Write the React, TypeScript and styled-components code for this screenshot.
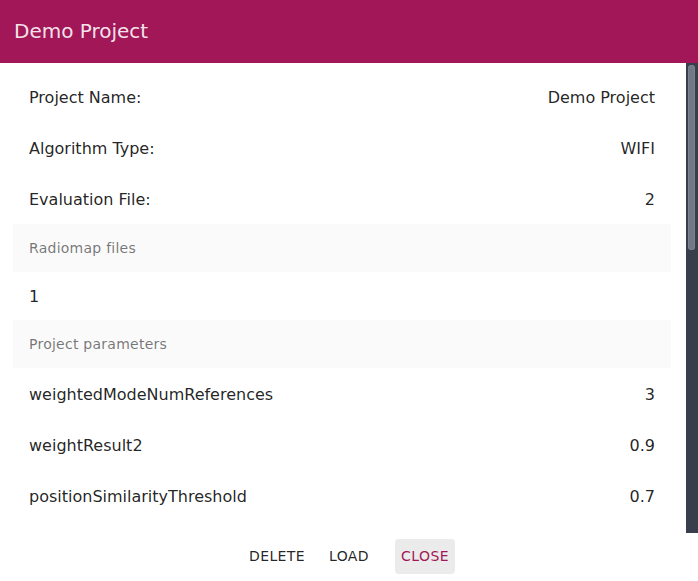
import React from "react";
import styled, { createGlobalStyle } from "styled-components";

const GlobalStyle = createGlobalStyle`
  html, body { margin: 0; padding: 0; height: 100%; background: #ffffff; }
  body { font-family: "DejaVu Sans", Verdana, sans-serif; -webkit-font-smoothing: antialiased; }
  #root { height: 100%; }
  * { box-sizing: border-box; }
`;

const Dialog = styled.div`
  display: flex;
  flex-direction: column;
  height: 100vh;
  background: #ffffff;
`;

const Header = styled.header`
  flex: 0 0 63px;
  display: flex;
  align-items: center;
  padding: 0 13px 1px 14px;
  background: #a21757;
  color: rgba(255, 255, 255, 0.9);
  font-size: 20px;
  font-weight: 400;
`;

const Body = styled.div`
  flex: 0 0 470px;
  display: flex;
  min-height: 0;
`;

const Content = styled.div`
  flex: 1 1 auto;
  overflow: hidden;
  padding: 8px 15px 0 13px;
`;

const ScrollTrack = styled.div`
  flex: 0 0 12px;
  padding: 2px 3px 0 2px;
  background: #393e4c;
`;

const ScrollThumb = styled.div`
  height: 185px;
  border-radius: 4px;
  background: #737887;
  box-shadow: inset 0 0 0 1px #7d8290;
`;

const List = styled.ul`
  list-style: none;
  margin: 0;
  padding: 0;
`;

const Row = styled.li<{ $tall?: boolean }>`
  display: flex;
  align-items: center;
  justify-content: space-between;
  height: ${(p) => (p.$tall ? 51 : 48)}px;
  padding: ${(p) => (p.$tall ? "1px 16px 0" : "0 16px")};
  font-size: 16px;
  color: rgba(0, 0, 0, 0.87);
`;

const Subheader = styled.li`
  display: flex;
  align-items: center;
  height: 48px;
  padding: 0 16px;
  background: #fafafa;
  font-size: 14px;
  letter-spacing: 0.25px;
  color: rgba(0, 0, 0, 0.54);
`;

const Actions = styled.div`
  flex: 0 0 48px;
  display: flex;
  align-items: center;
  justify-content: center;
  padding: 0 8px 2px;
`;

const Button = styled.button<{ $primary?: boolean; $active?: boolean; $gap?: number }>`
  height: 35px;
  min-width: 60px;
  padding: 0 6px;
  margin-left: ${(p) => p.$gap ?? 0}px;
  border: none;
  border-radius: 4px;
  background: ${(p) => (p.$active ? "#ebebeb" : "transparent")};
  color: ${(p) => (p.$primary ? "#a21757" : "rgba(0, 0, 0, 0.87)")};
  font-family: "DejaVu Sans", Verdana, sans-serif;
  font-size: 14px;
  letter-spacing: 0.4px;
  text-transform: uppercase;
  cursor: pointer;
`;

const info = [
  ["Project Name:", "Demo Project"],
  ["Algorithm Type:", "WIFI"],
  ["Evaluation File:", "2"],
];

const params = [
  ["weightedModeNumReferences", "3"],
  ["weightResult2", "0.9"],
  ["positionSimilarityThreshold", "0.7"],
];

export default function App() {
  return (
    <>
      <GlobalStyle />
      <Dialog>
        <Header>Demo Project</Header>
        <Body>
          <Content>
            <List>
              {info.map(([k, v]) => (
                <Row $tall key={k}>
                  <span>{k}</span>
                  <span>{v}</span>
                </Row>
              ))}
              <Subheader>Radiomap files</Subheader>
              <Row>
                <span>1</span>
              </Row>
              <Subheader>Project parameters</Subheader>
              {params.map(([k, v]) => (
                <Row $tall key={k}>
                  <span>{k}</span>
                  <span>{v}</span>
                </Row>
              ))}
            </List>
          </Content>
          <ScrollTrack>
            <ScrollThumb />
          </ScrollTrack>
        </Body>
        <Actions>
          <Button>Delete</Button>
          <Button $gap={8}>Load</Button>
          <Button $gap={16} $primary $active>
            Close
          </Button>
        </Actions>
      </Dialog>
    </>
  );
}
